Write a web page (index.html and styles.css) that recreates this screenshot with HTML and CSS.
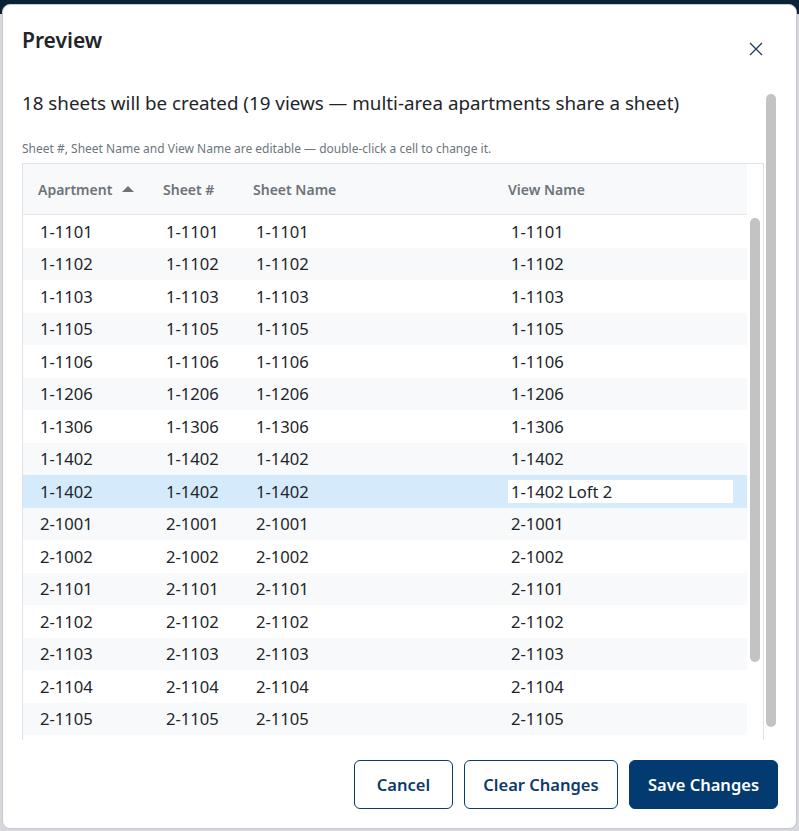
FILE: index.html
```html
<!DOCTYPE html>
<html lang="en">
<head>
<meta charset="utf-8">
<title>Preview</title>
<link rel="stylesheet" href="styles.css">
</head>
<body>
<div class="dialog">
  <div class="dialog-header">
    <h1 class="title">Preview</h1>
    <button class="close" aria-label="Close">
      <svg width="14" height="14" viewBox="0 0 14 14"><path d="M1 1 L13 13 M13 1 L1 13" stroke="#1d3d66" stroke-width="1.3" fill="none"/></svg>
    </button>
  </div>
  <div class="dialog-body">
    <div class="content">
      <p class="summary">18 sheets will be created (19 views — multi-area apartments share a sheet)</p>
      <p class="hint">Sheet #, Sheet Name and View Name are editable — double-click a cell to change it.</p>
      <div class="grid">
        <div class="grid-head">
          <div class="hcell c1">Apartment <svg class="sort" width="12" height="6" viewBox="0 0 12 6"><polygon points="0,6 6,0 12,6" fill="#6c737b"/></svg></div>
          <div class="hcell c2">Sheet #</div>
          <div class="hcell c3">Sheet Name</div>
          <div class="hcell c4">View Name</div>
          <div class="hspacer"></div>
        </div>
        <div class="grid-body">
          <div class="rows">
            <div class="row"><div class="cell c1">1-1101</div><div class="cell c2">1-1101</div><div class="cell c3">1-1101</div><div class="cell c4">1-1101</div></div>
            <div class="row"><div class="cell c1">1-1102</div><div class="cell c2">1-1102</div><div class="cell c3">1-1102</div><div class="cell c4">1-1102</div></div>
            <div class="row"><div class="cell c1">1-1103</div><div class="cell c2">1-1103</div><div class="cell c3">1-1103</div><div class="cell c4">1-1103</div></div>
            <div class="row"><div class="cell c1">1-1105</div><div class="cell c2">1-1105</div><div class="cell c3">1-1105</div><div class="cell c4">1-1105</div></div>
            <div class="row"><div class="cell c1">1-1106</div><div class="cell c2">1-1106</div><div class="cell c3">1-1106</div><div class="cell c4">1-1106</div></div>
            <div class="row"><div class="cell c1">1-1206</div><div class="cell c2">1-1206</div><div class="cell c3">1-1206</div><div class="cell c4">1-1206</div></div>
            <div class="row"><div class="cell c1">1-1306</div><div class="cell c2">1-1306</div><div class="cell c3">1-1306</div><div class="cell c4">1-1306</div></div>
            <div class="row"><div class="cell c1">1-1402</div><div class="cell c2">1-1402</div><div class="cell c3">1-1402</div><div class="cell c4">1-1402</div></div>
            <div class="row selected"><div class="cell c1">1-1402</div><div class="cell c2">1-1402</div><div class="cell c3">1-1402</div><div class="cell c4 editing"><input class="editor" type="text" value="1-1402 Loft 2"></div></div>
            <div class="row"><div class="cell c1">2-1001</div><div class="cell c2">2-1001</div><div class="cell c3">2-1001</div><div class="cell c4">2-1001</div></div>
            <div class="row"><div class="cell c1">2-1002</div><div class="cell c2">2-1002</div><div class="cell c3">2-1002</div><div class="cell c4">2-1002</div></div>
            <div class="row"><div class="cell c1">2-1101</div><div class="cell c2">2-1101</div><div class="cell c3">2-1101</div><div class="cell c4">2-1101</div></div>
            <div class="row"><div class="cell c1">2-1102</div><div class="cell c2">2-1102</div><div class="cell c3">2-1102</div><div class="cell c4">2-1102</div></div>
            <div class="row"><div class="cell c1">2-1103</div><div class="cell c2">2-1103</div><div class="cell c3">2-1103</div><div class="cell c4">2-1103</div></div>
            <div class="row"><div class="cell c1">2-1104</div><div class="cell c2">2-1104</div><div class="cell c3">2-1104</div><div class="cell c4">2-1104</div></div>
            <div class="row"><div class="cell c1">2-1105</div><div class="cell c2">2-1105</div><div class="cell c3">2-1105</div><div class="cell c4">2-1105</div></div>
          </div>
          <div class="vscroll"><div class="thumb inner-thumb"></div></div>
        </div>
      </div>
    </div>
    <div class="outer-scroll"><div class="thumb outer-thumb"></div></div>
  </div>
  <div class="dialog-footer">
    <button class="btn btn-outline btn-cancel">Cancel</button>
    <button class="btn btn-outline btn-clear">Clear Changes</button>
    <button class="btn btn-primary btn-save">Save Changes</button>
  </div>
</div>
</body>
</html>
```

FILE: styles.css
```css
* { box-sizing: border-box; }
html, body { margin: 0; height: 100%; }
body {
  background: linear-gradient(#0b2137 0, #0b2137 14px, #d6d8dc 14px);
  font-family: "Noto Sans", "Open Sans", sans-serif;
  color: #212529;
  overflow: hidden;
}
.dialog {
  margin: 4px 2px 0 2px;
  height: 825px;
  background: #fff;
  border: 1px solid #c5c9cf;
  border-radius: 8px;
  display: flex;
  flex-direction: column;
  overflow: hidden;
}
.dialog-header {
  height: 75px;
  flex: none;
  padding: 0 19px;
  display: flex;
  justify-content: space-between;
  align-items: flex-start;
}
.title {
  margin: 20px 0 0;
  font-size: 21px;
  line-height: 30px;
  font-weight: 600;
  color: #212529;
}
.close {
  margin: 37px 14px 0 0;
  padding: 0;
  width: 14px;
  height: 14px;
  border: 0;
  background: none;
  display: block;
}
.close svg { display: block; }
.dialog-body {
  height: 660px;
  flex: none;
  padding-left: 19px;
  display: flex;
  overflow: hidden;
}
.content {
  width: 742px;
  flex: none;
  padding-top: 10px;
  display: flex;
  flex-direction: column;
}
.summary {
  margin: 0;
  font-size: 18.8px;
  line-height: 27px;
  color: #212529;
}
.hint {
  margin: 23px 0 0;
  font-size: 12px;
  line-height: 18px;
  color: #6c757d;
}
.grid {
  margin-top: 5px;
  flex: 1;
  border: 1px solid #dfe2e6;
  border-bottom: 0;
  display: flex;
  flex-direction: column;
}
.grid-head {
  display: flex;
  height: 51px;
  flex: none;
}
.hcell {
  height: 51px;
  background: #f8f9fa;
  border-bottom: 1px solid #e3e6ea;
  padding-left: 15px;
  display: flex;
  align-items: center;
  font-size: 14px;
  font-weight: 600;
  color: #6c737b;
}
.sort { margin-left: 10px; }
.c1 { width: 125px; }
.c2 { width: 90px; }
.c3 { width: 255px; }
.c4 { width: 254px; }
.hspacer { width: 16px; }
.grid-body { display: flex; flex: 1; }
.rows { width: 724px; }
.row {
  display: flex;
  height: 32.5px;
  background: #fff;
}
.row:nth-child(even) { background: #f8f9fa; }
.row.selected { background: #d5ebfb; }
.cell {
  padding-left: 18px;
  display: flex;
  align-items: center;
  font-size: 16.6px;
  color: #212529;
  white-space: nowrap;
}
.cell.c1 { padding-left: 17px; }
.cell.editing { padding: 0 14px 0 15px; }
.editor {
  width: 100%;
  height: 23px;
  border: 0;
  outline: none;
  background: #fff;
  padding: 0 3px;
  font-family: inherit;
  font-size: 16.6px;
  color: #212529;
}
.vscroll {
  width: 16px;
  padding: 3px 0 0 3px;
}
.thumb {
  width: 10px;
  border-radius: 5px;
  background: #c3c3c3;
}
.inner-thumb { height: 444px; }
.outer-scroll {
  margin-left: 2px;
  padding-top: 14px;
}
.outer-thumb { height: 633px; }
.dialog-footer {
  flex: 1;
  padding: 20px 18px 0 0;
  display: flex;
  justify-content: flex-end;
  align-items: flex-start;
  gap: 11px;
}
.btn {
  height: 49px;
  border-radius: 6px;
  font-family: inherit;
  font-size: 16.5px;
  font-weight: 600;
  padding: 0;
  cursor: pointer;
}
.btn-outline {
  background: #fff;
  border: 1px solid #0b3a6b;
  color: #0b3a6b;
}
.btn-primary {
  background: #033a70;
  border: 1px solid #033a70;
  color: #fff;
}
.btn-cancel { width: 99px; }
.btn-clear { width: 154px; }
.btn-save { width: 149px; }
```
